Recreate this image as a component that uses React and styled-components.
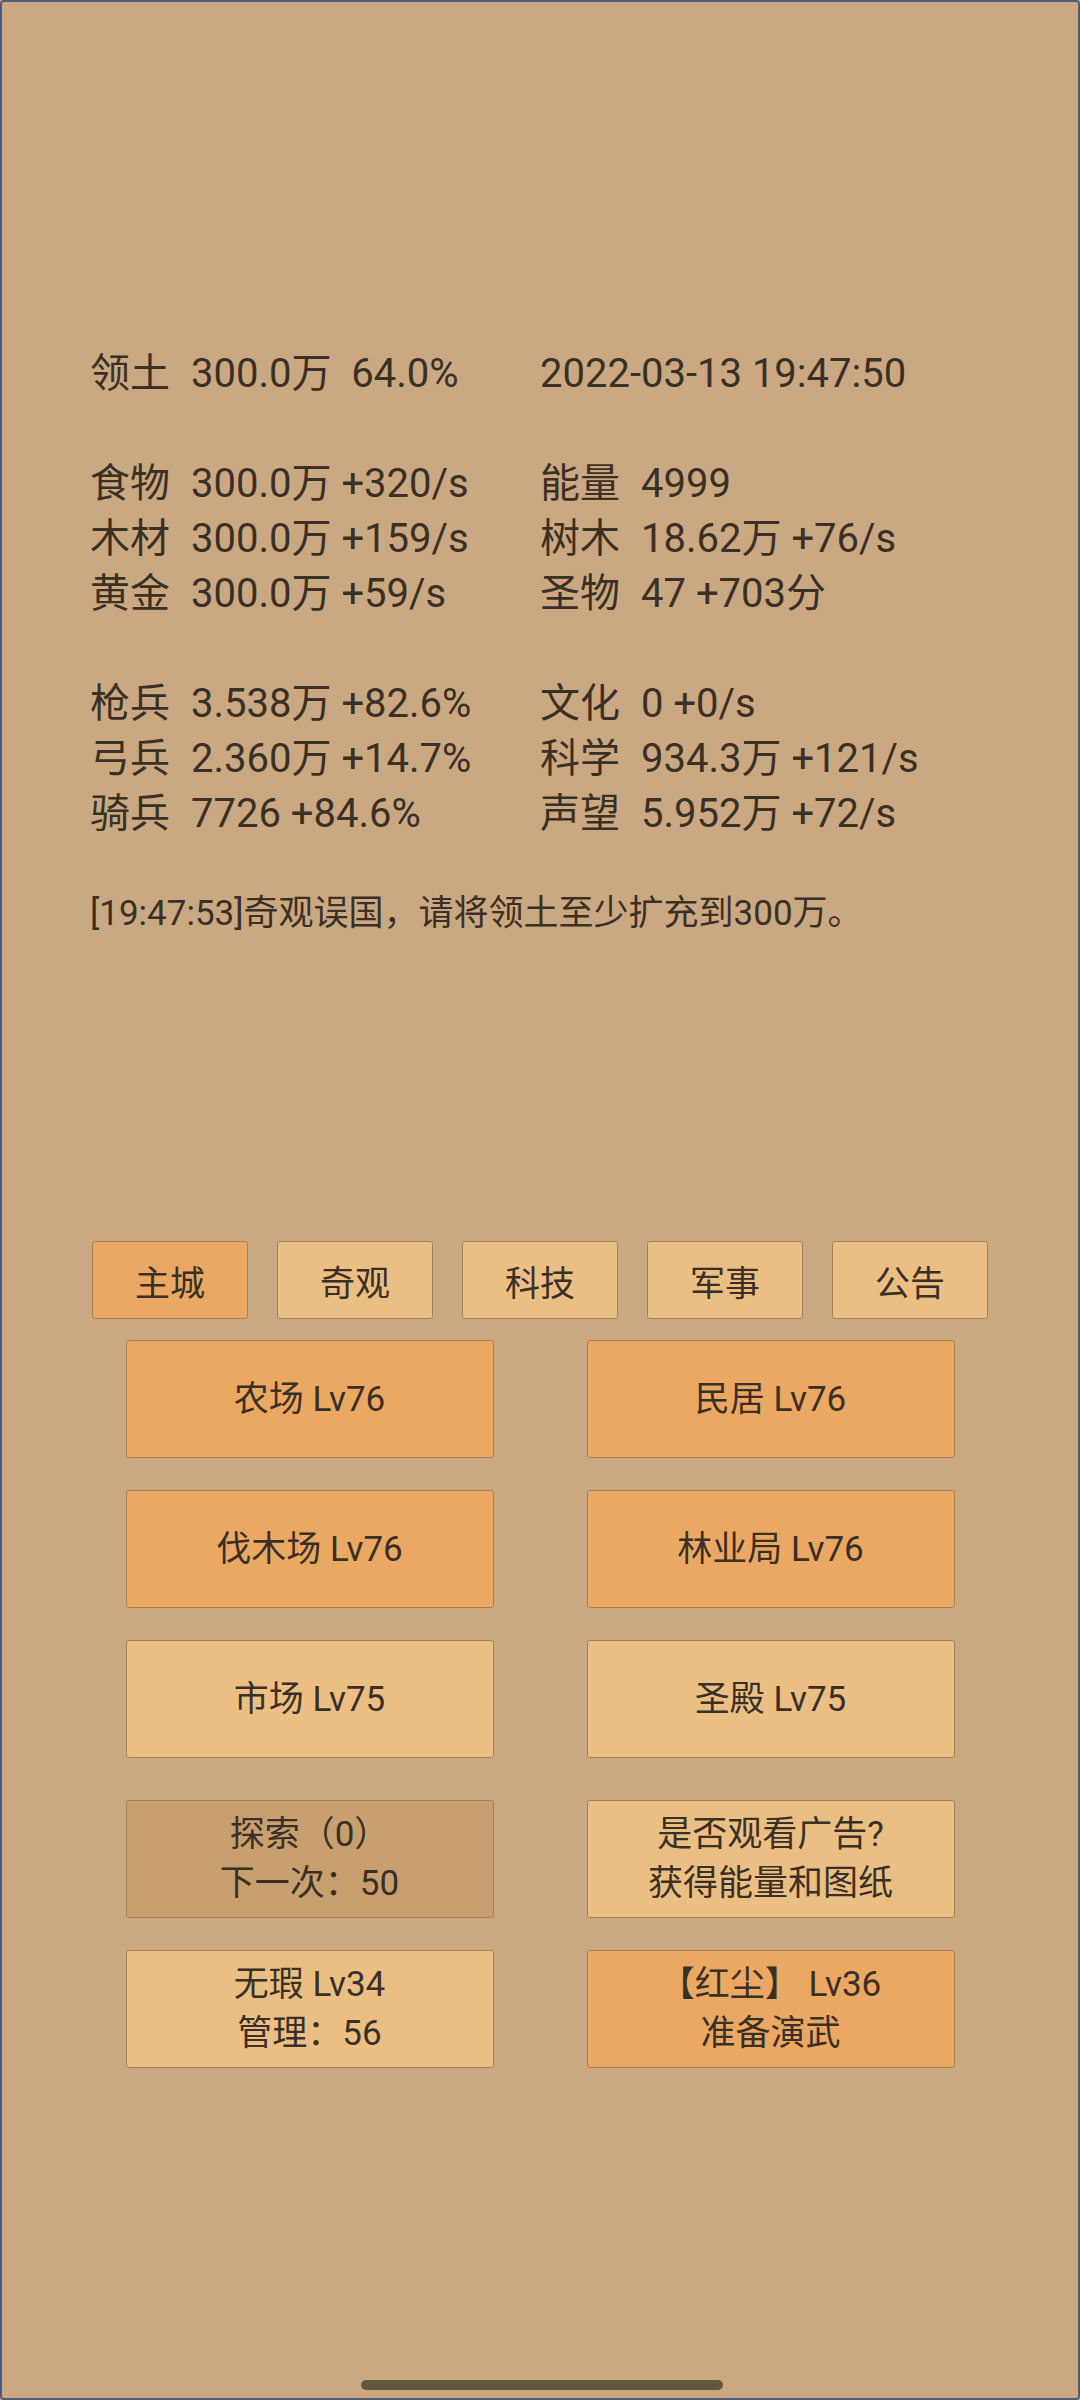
import React from 'react'
import styled, { createGlobalStyle } from 'styled-components'

const GlobalStyle = createGlobalStyle`
    html, body {
        margin: 0;
        padding: 0;
        background: #caa982;
    }
    * {
        box-sizing: border-box;
    }
`

const Screen = styled.div`
    width: 1080px;
    height: 2400px;
    background: #caa982;
    border: 2px solid #4f5d7c;
    border-radius: 4px;
    font-family: Roboto, "Noto Sans CJK SC", sans-serif;
    color: #3a3026;
    display: flex;
    flex-direction: column;
    align-items: center;
    padding-top: 344px;
    position: relative;
`

const Stats = styled.div`
    width: 100%;
    padding-left: 88px;
    font-size: 40px;
    line-height: 55px;
`

const StatGroup = styled.div`
    display: grid;
    grid-template-columns: 450px 1fr;
    margin-bottom: 55px;

    &:last-child {
        margin-bottom: 0;
    }
`

const Stat = styled.div`
    display: flex;
    white-space: pre;
`

const Label = styled.span`
    width: 101px;
    flex: none;
`

const Message = styled.div`
    width: 100%;
    padding-left: 88px;
    margin-top: 45px;
    font-size: 35px;
    line-height: 55px;
    white-space: nowrap;
`

const Tabs = styled.div`
    display: flex;
    gap: 29px;
    margin-top: 300px;
`

const Tab = styled.div`
    width: 156px;
    height: 78px;
    display: flex;
    align-items: center;
    justify-content: center;
    font-size: 35px;
    background: ${p => (p.active ? '#eba862' : '#ebbf84')};
    border: 1.5px solid #a87e50;
    border-radius: 3px;
`

const Grid = styled.div`
    display: grid;
    grid-template-columns: 368px 368px;
    column-gap: 93px;
    margin-top: 21px;
`

const Building = styled.div`
    height: 118px;
    margin-bottom: ${p => p.extra ? '42px' : '32px'};
    display: flex;
    flex-direction: column;
    align-items: center;
    justify-content: center;
    font-size: 35px;
    line-height: 49px;
    text-align: center;
    border: 1.5px solid #a87e50;
    border-radius: 3px;
    background: ${p => p.tone === 'hot' ? '#eba862' : p.tone === 'dim' ? '#c89f6f' : '#ebbf84'};
`

const HomeBar = styled.div`
    position: absolute;
    bottom: 8px;
    left: 359px;
    width: 362px;
    height: 10px;
    border-radius: 5px;
    background: #655640;
`

const groups = [
    [
        ['领土', '300.0万  64.0%'],
        ['', '2022-03-13 19:47:50'],
    ],
    [
        ['食物', '300.0万 +320/s'],
        ['能量', '4999'],
        ['木材', '300.0万 +159/s'],
        ['树木', '18.62万 +76/s'],
        ['黄金', '300.0万 +59/s'],
        ['圣物', '47 +703分'],
    ],
    [
        ['枪兵', '3.538万 +82.6%'],
        ['文化', '0 +0/s'],
        ['弓兵', '2.360万 +14.7%'],
        ['科学', '934.3万 +121/s'],
        ['骑兵', '7726 +84.6%'],
        ['声望', '5.952万 +72/s'],
    ],
]

const tabs = ['主城', '奇观', '科技', '军事', '公告']

const buildings = [
    { lines: ['农场 Lv76'], tone: 'hot' },
    { lines: ['民居 Lv76'], tone: 'hot' },
    { lines: ['伐木场 Lv76'], tone: 'hot' },
    { lines: ['林业局 Lv76'], tone: 'hot' },
    { lines: ['市场 Lv75'], extra: true },
    { lines: ['圣殿 Lv75'], extra: true },
    { lines: ['探索（0）', '下一次：50'], tone: 'dim' },
    { lines: ['是否观看广告?', '获得能量和图纸'] },
    { lines: ['无瑕 Lv34', '管理：56'] },
    { lines: ['【红尘】 Lv36', '准备演武'], tone: 'hot' },
]

const App = () => {
    return (
        <Screen>
            <GlobalStyle />
            <Stats>
                {groups.map((g, i) => (
                    <StatGroup key={i}>
                        {g.map(([label, value], j) => (
                            <Stat key={j}>
                                {label && <Label>{label}</Label>}
                                <span>{value}</span>
                            </Stat>
                        ))}
                    </StatGroup>
                ))}
            </Stats>
            <Message>[19:47:53]奇观误国，请将领土至少扩充到300万。</Message>
            <Tabs>
                {tabs.map((t, i) => (
                    <Tab key={t} active={i === 0}>{t}</Tab>
                ))}
            </Tabs>
            <Grid>
                {buildings.map((b, i) => (
                    <Building key={i} tone={b.tone} extra={b.extra}>
                        {b.lines.map(l => <div key={l}>{l}</div>)}
                    </Building>
                ))}
            </Grid>
            <HomeBar />
        </Screen>
    )
}

export default App
